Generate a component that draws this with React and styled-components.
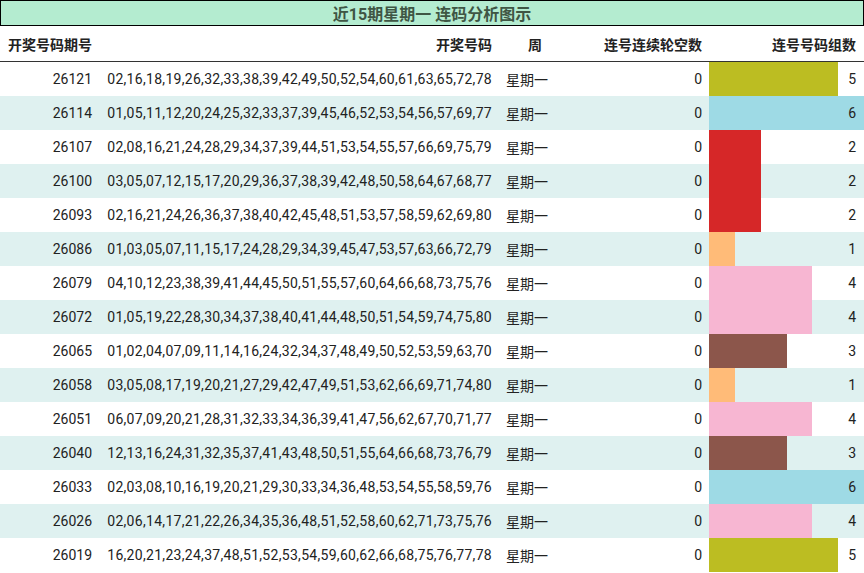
import React from "react";
import styled, { createGlobalStyle } from "styled-components";

const Global = createGlobalStyle`
  body { margin: 0; background: #fff; font-family: Roboto, "Noto Sans CJK SC", sans-serif; }
`;

const Wrap = styled.div`
  width: 864px;
  font-size: 14px;
  color: #222;
`;
const Title = styled.div`
  height: 24px;
  border: 1px solid #000;
  background: #b4ecd0;
  color: #3f5644;
  font-weight: bold;
  font-size: 16px;
  display: flex;
  align-items: center;
  justify-content: center;
`;
const Row = styled.div`
  display: grid;
  grid-template-columns: 98px 396px 70px 145px 155px;
  height: ${p => (p.$head ? "35px" : "34px")};
  background: ${p => (p.$alt ? "#dff1f0" : "#fff")};
  border-bottom: ${p => (p.$head ? "1px solid #333" : "none")};
  font-weight: ${p => (p.$head ? "bold" : "normal")};
`;
const Cell = styled.div`
  display: flex;
  align-items: center;
  justify-content: ${p => p.$align || "flex-end"};
  padding: ${p => p.$pad || "0"};
  white-space: nowrap;
  letter-spacing: ${p => p.$ls || "0"};
`;
const BarCell = styled.div`
  position: relative;
  display: flex;
  align-items: stretch;
`;
const Bar = styled.div`
  background: ${p => p.$c};
`;
const Count = styled.span`
  position: absolute;
  right: 8px;
  top: 0;
  bottom: 0;
  display: flex;
  align-items: center;
`;

const C = { 1: "#ffbb78", 2: "#d62728", 3: "#8c564b", 4: "#f7b6d2", 5: "#bcbd22", 6: "#9edae5" };

const data = [
  ["26121", "02,16,18,19,26,32,33,38,39,42,49,50,52,54,60,61,63,65,72,78", 5],
  ["26114", "01,05,11,12,20,24,25,32,33,37,39,45,46,52,53,54,56,57,69,77", 6],
  ["26107", "02,08,16,21,24,28,29,34,37,39,44,51,53,54,55,57,66,69,75,79", 2],
  ["26100", "03,05,07,12,15,17,20,29,36,37,38,39,42,48,50,58,64,67,68,77", 2],
  ["26093", "02,16,21,24,26,36,37,38,40,42,45,48,51,53,57,58,59,62,69,80", 2],
  ["26086", "01,03,05,07,11,15,17,24,28,29,34,39,45,47,53,57,63,66,72,79", 1],
  ["26079", "04,10,12,23,38,39,41,44,45,50,51,55,57,60,64,66,68,73,75,76", 4],
  ["26072", "01,05,19,22,28,30,34,37,38,40,41,44,48,50,51,54,59,74,75,80", 4],
  ["26065", "01,02,04,07,09,11,14,16,24,32,34,37,48,49,50,52,53,59,63,70", 3],
  ["26058", "03,05,08,17,19,20,21,27,29,42,47,49,51,53,62,66,69,71,74,80", 1],
  ["26051", "06,07,09,20,21,28,31,32,33,34,36,39,41,47,56,62,67,70,71,77", 4],
  ["26040", "12,13,16,24,31,32,35,37,41,43,48,50,51,55,64,66,68,73,76,79", 3],
  ["26033", "02,03,08,10,16,19,20,21,29,30,33,34,36,48,53,54,55,58,59,76", 6],
  ["26026", "02,06,14,17,21,22,26,34,35,36,48,51,52,58,60,62,71,73,75,76", 4],
  ["26019", "16,20,21,23,24,37,48,51,52,53,54,59,60,62,66,68,75,76,77,78", 5],
];

export default function App() {
  return (
    <Wrap>
      <Global />
      <Title>近15期星期一 连码分析图示</Title>
      <Row $head>
        <Cell $align="flex-start" $pad="0 0 0 8px">开奖号码期号</Cell>
        <Cell $pad="0 2px 0 0">开奖号码</Cell>
        <Cell $align="center" $pad="0 0 0 12px">周</Cell>
        <Cell $pad="0 7px 0 0">连号连续轮空数</Cell>
        <Cell $pad="0 8px 0 0">连号号码组数</Cell>
      </Row>
      {data.map(([id, nums, n], i) => (
        <Row key={id} $alt={i % 2 === 1}>
          <Cell $pad="0 6px 0 0">{id}</Cell>
          <Cell $pad="0 2px 0 0" $ls="0.3px">{nums}</Cell>
          <Cell $align="center" $pad="0 4px 0 0">星期一</Cell>
          <Cell $pad="0 7px 0 0">0</Cell>
          <BarCell>
            <Bar $c={C[n]} style={{ width: `${(n / 6) * 155}px` }} />
            <Count>{n}</Count>
          </BarCell>
        </Row>
      ))}
    </Wrap>
  );
}
